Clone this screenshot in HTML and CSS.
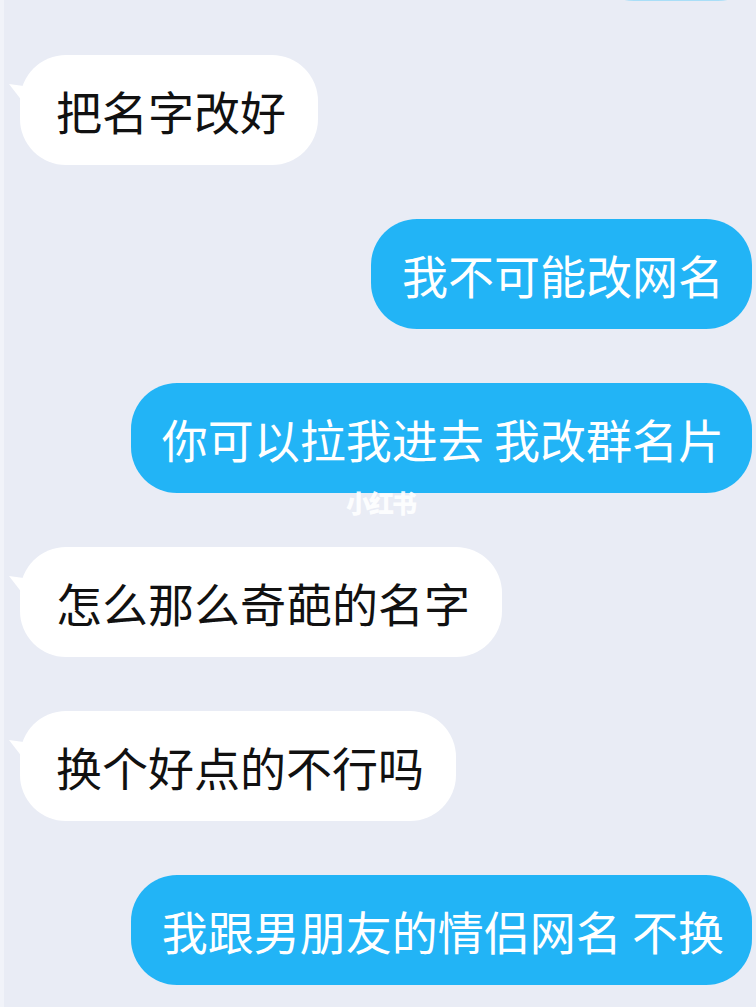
FILE: index.html
```html
<!DOCTYPE html>
<html lang="zh-CN">

<head>
    <meta charset="UTF-8" />
    <meta name="viewport" content="width=device-width, initial-scale=1.0" />
    <title>聊天记录</title>
    <link rel="stylesheet" href="styles.css">
</head>

<body>
    <div class="chat">
        <!-- bottom edge of the message above the visible area -->
        <div class="msg out prev"></div>
        <div class="msg in">把名字改好</div>
        <div class="msg out">我不可能改网名</div>
        <div class="msg out">你可以拉我进去 我改群名片</div>
        <div class="msg in">怎么那么奇葩的名字</div>
        <div class="msg in">换个好点的不行吗</div>
        <div class="msg out">我跟男朋友的情侣网名 不换</div>
        <span class="mark">小红书</span>
    </div>
</body>

</html>
```

FILE: styles.css
```css
body {
    margin: 0;
    padding: 0;
    background-color: #e9ecf5;
    font-family: "Noto Sans CJK SC", "Noto Sans", sans-serif;
}

.chat {
    position: relative;
    display: flex;
    flex-direction: column;
    gap: 54px;
    min-height: 1007px;
    padding: 0 4px 0 20px;
    border-left: 4px solid #f1f3f9;
    box-sizing: border-box;
    overflow: hidden;
}

.msg {
    position: relative;
    height: 110px;
    line-height: 110px;
    font-size: 46px;
    border-radius: 46px;
    white-space: nowrap;
    box-sizing: border-box;
}

.msg.in {
    align-self: flex-start;
    margin-left: -4px;
    padding: 0 32px 0 36px;
    background-color: #fff;
    color: #111;
}

/* little tail on the left of incoming bubbles */
.msg.in::before {
    content: "";
    position: absolute;
    left: -11px;
    top: 29px;
    width: 20px;
    height: 22px;
    background-color: #fff;
    clip-path: polygon(0 0, 100% 12%, 100% 100%, 60% 70%);
}

.msg.out {
    align-self: flex-end;
    padding: 0 28px 0 31px;
    background-color: #22b4f6;
    color: #fff;
}

.msg.prev {
    width: 176px;
    margin-top: -109px;
    margin-right: -12px;
    background-color: #a9def7;
}

.mark {
    position: absolute;
    left: 342px;
    top: 484px;
    font-size: 25px;
    font-weight: 900;
    letter-spacing: -2px;
    color: rgba(255, 255, 255, 0.92);
}
```
